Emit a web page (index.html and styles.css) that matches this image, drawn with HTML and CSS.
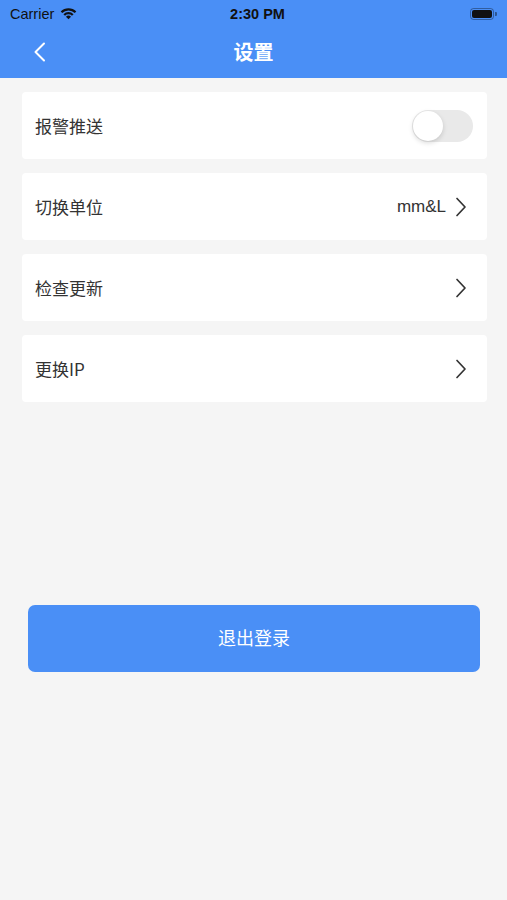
FILE: index.html
```html
<!DOCTYPE html>
<html>
<head>
<meta charset="utf-8">
<link rel="stylesheet" href="styles.css">
</head>
<body>
<div class="top">
  <div class="status">
    <div class="status-left">
      <span class="carrier">Carrier</span>
      <svg class="wifi" width="19" height="14" viewBox="0 0 18 13">
        <path d="M9 12.5 L6.6 10 A3.4 3.4 0 0 1 11.4 10 Z" fill="#111"/>
        <path d="M4.2 7.6 A6.8 6.8 0 0 1 13.8 7.6 L12.3 9.1 A4.7 4.7 0 0 0 5.7 9.1 Z" fill="#111"/>
        <path d="M1.6 5 A10.5 10.5 0 0 1 16.4 5 L14.9 6.5 A8.4 8.4 0 0 0 3.1 6.5 Z" fill="#111"/>
      </svg>
    </div>
    <div class="time">2:30 PM</div>
    <div class="status-right">
      <div class="battery"><div class="battery-fill"></div></div>
      <div class="battery-cap"></div>
    </div>
  </div>
  <div class="nav">
    <svg class="back" width="14" height="20" viewBox="0 0 14 20">
      <path d="M11 1.5 L2.5 10 L11 18.5" fill="none" stroke="#fff" stroke-width="2" stroke-linecap="round" stroke-linejoin="round"/>
    </svg>
    <div class="title">设置</div>
  </div>
</div>
<div class="list">
  <div class="card">
    <span class="label">报警推送</span>
    <div class="toggle"><div class="knob"></div></div>
  </div>
  <div class="card">
    <span class="label">切换单位</span>
    <div class="right">
      <span class="value">mm&amp;L</span>
      <svg class="chev" width="12" height="20" viewBox="0 0 12 20"><path d="M2 1.5 L10 10 L2 18.5" fill="none" stroke="#333" stroke-width="1.7" stroke-linecap="round" stroke-linejoin="round"/></svg>
    </div>
  </div>
  <div class="card">
    <span class="label">检查更新</span>
    <div class="right">
      <svg class="chev" width="12" height="20" viewBox="0 0 12 20"><path d="M2 1.5 L10 10 L2 18.5" fill="none" stroke="#333" stroke-width="1.7" stroke-linecap="round" stroke-linejoin="round"/></svg>
    </div>
  </div>
  <div class="card">
    <span class="label">更换IP</span>
    <div class="right">
      <svg class="chev" width="12" height="20" viewBox="0 0 12 20"><path d="M2 1.5 L10 10 L2 18.5" fill="none" stroke="#333" stroke-width="1.7" stroke-linecap="round" stroke-linejoin="round"/></svg>
    </div>
  </div>
</div>
<div class="logout-wrap">
  <div class="logout">退出登录</div>
</div>
</body>
</html>
```
FILE: styles.css
```css
* { box-sizing: border-box; }
html, body { margin: 0; padding: 0; }
body {
  width: 507px;
  height: 900px;
  background: #f5f5f5;
  font-family: "Noto Sans CJK SC", "Liberation Sans", sans-serif;
  color: #333;
  overflow: hidden;
}
.top {
  background: #4a8ff6;
}
.status {
  height: 28px;
  display: flex;
  align-items: center;
  justify-content: space-between;
  padding: 0 10px 0 10px;
}
.status-left {
  display: flex;
  align-items: center;
  gap: 5px;
  width: 130px;
}
.carrier {
  font-family: "Liberation Sans", sans-serif;
  font-size: 14.5px;
  color: #111;
}
.wifi { margin-top: -3px; }
.time {
  font-family: "Liberation Sans", sans-serif;
  font-weight: bold;
  font-size: 14.5px;
  color: #111;
  margin-left: 8px;
}
.status-right {
  width: 130px;
  display: flex;
  justify-content: flex-end;
  align-items: center;
}
.battery {
  width: 24px;
  height: 12px;
  border: 1px solid rgba(0,0,0,0.35);
  border-radius: 3.5px;
  padding: 1px;
}
.battery-fill {
  width: 100%;
  height: 100%;
  background: #111;
  border-radius: 2px;
}
.battery-cap {
  width: 2px;
  height: 4px;
  background: rgba(0,0,0,0.4);
  border-radius: 0 1px 1px 0;
  margin-left: 1px;
}
.nav {
  height: 50px;
  display: flex;
  align-items: center;
  justify-content: center;
  position: relative;
  padding-bottom: 3px;
}
.back {
  position: absolute;
  left: 33px;
  top: 14px;
}
.title {
  color: #fff;
  font-size: 20px;
  font-weight: bold;
}
.list {
  padding: 14px 20px 0 22px;
  display: flex;
  flex-direction: column;
  gap: 14px;
}
.card {
  background: #fff;
  height: 67px;
  border-radius: 4px;
  display: flex;
  align-items: center;
  justify-content: space-between;
  padding: 0 20px 0 13px;
}
.label {
  font-size: 17px;
  color: #333;
}
.right {
  display: flex;
  align-items: center;
  gap: 9px;
}
.value {
  font-family: "Liberation Sans", sans-serif;
  font-size: 17px;
  color: #333;
}
.chev { display: block; }
.toggle {
  width: 61px;
  height: 32px;
  border-radius: 16px;
  background: #e9e9e9;
  margin-right: -6px;
  padding: 1px;
}
.knob {
  width: 30px;
  height: 30px;
  border-radius: 50%;
  background: #fff;
  box-shadow: 0 2px 5px rgba(0,0,0,0.15);
}
.logout-wrap {
  padding: 203px 27px 0 28px;
}
.logout {
  height: 67px;
  background: #4a8ff6;
  border-radius: 7px;
  display: flex;
  align-items: center;
  justify-content: center;
  color: #fff;
  font-size: 18px;
  padding-bottom: 3px;
}
```
